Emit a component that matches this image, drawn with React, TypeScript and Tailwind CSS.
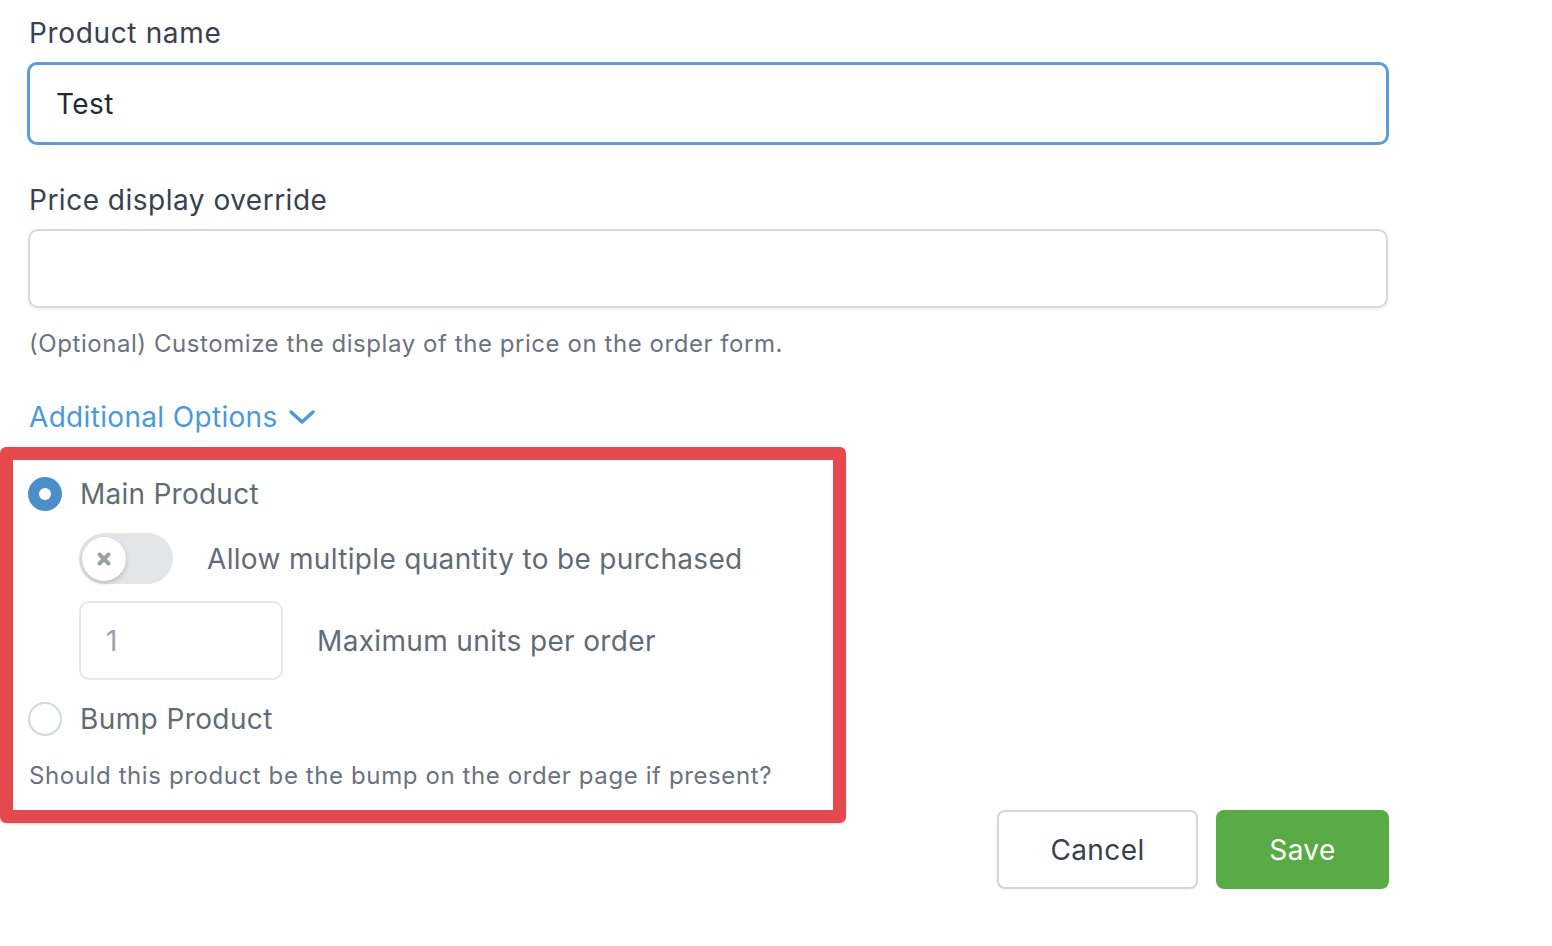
import React from "react";

export default function App() {
  return (
    <div
      className="relative w-[1552px] h-[946px] bg-white overflow-hidden"
      style={{ fontFamily: "Inter, 'Noto Sans', sans-serif" }}
    >
      <div className="w-[1389px] pl-[27px] flex flex-col">
        <label className="mt-[15px] h-[36px] leading-[36px] text-[28px] text-[#374151] pl-[2px] tracking-[0.65px]">
          Product name
        </label>
        <div className="mt-[11px] h-[83px] border-[3px] border-[#5b9dd6] rounded-[10px] flex items-center pl-[26px] text-[28px] text-[#1f2937] tracking-[0.4px]">
          Test
        </div>
        <label className="mt-[37px] h-[36px] leading-[36px] text-[28px] text-[#374151] pl-[2px] tracking-[0.5px]">
          Price display override
        </label>
        <div className="mt-[11px] ml-[1px] mr-[1px] h-[79px] border-2 border-[#d6d9de] rounded-[10px] shadow-[0_2px_2px_rgba(0,0,0,0.06)]" />
        <p className="mt-[20px] h-[32px] leading-[32px] text-[24px] text-[#6b7280] pl-[2px] tracking-[0.56px]">
          (Optional) Customize the display of the price on the order form.
        </p>
        <div className="mt-[39px] h-[36px] flex items-center gap-[10px] text-[28px] text-[#4a9ad8] pl-[2px]">
          <span className="leading-[36px] tracking-[0.33px]">Additional Options</span>
          <svg width="28" height="18" viewBox="0 0 28 18" fill="none">
            <path d="M3 4 L14 14 L25 4" stroke="#4a9ad8" strokeWidth="3.5" strokeLinecap="round" strokeLinejoin="round" />
          </svg>
        </div>

        <div className="mt-[41px] h-[36px] flex items-center gap-[18px] pl-[1px]">
          <span className="w-[34px] h-[34px] rounded-full bg-[#4b8ec9] flex items-center justify-center">
            <span className="w-[12px] h-[12px] rounded-full bg-white" />
          </span>
          <span className="text-[28px] leading-[36px] text-[#5f6c78] tracking-[0.25px]">Main Product</span>
        </div>

        <div className="mt-[21px] h-[51px] pl-[52px] flex items-center gap-[34px]">
          <span className="w-[94px] h-[51px] rounded-full bg-[#e4e5e9] flex items-center pl-[3px]">
            <span className="w-[44px] h-[44px] rounded-full bg-white shadow-[0_2px_5px_rgba(0,0,0,0.2)] flex items-center justify-center">
              <svg width="16" height="16" viewBox="0 0 16 16">
                <path d="M3.5 3.5 L12.5 12.5 M12.5 3.5 L3.5 12.5" stroke="#9aa0aa" strokeWidth="4" strokeLinecap="round" />
              </svg>
            </span>
          </span>
          <span className="text-[28px] leading-[36px] text-[#5f6c78] tracking-[0.33px]">
            Allow multiple quantity to be purchased
          </span>
        </div>

        <div className="mt-[17px] h-[79px] pl-[52px] flex items-center gap-[34px]">
          <div className="w-[204px] h-[79px] border-2 border-[#e6e7eb] rounded-[10px] flex items-center pl-[25px] text-[28px] text-[#9aa1ab]">
            1
          </div>
          <span className="text-[28px] leading-[36px] text-[#5f6c78] tracking-[0.35px]">Maximum units per order</span>
        </div>

        <div className="mt-[21px] h-[36px] flex items-center gap-[18px] pl-[1px]">
          <span className="w-[34px] h-[34px] rounded-full border-2 border-[#d5d8dd] bg-white" />
          <span className="text-[28px] leading-[36px] text-[#5f6c78] tracking-[0.4px]">Bump Product</span>
        </div>

        <p className="mt-[23px] h-[32px] leading-[32px] text-[24px] text-[#6b7280] pl-[2px] tracking-[0.6px]">
          Should this product be the bump on the order page if present?
        </p>

        <div className="mt-[18px] flex justify-end gap-[18px]">
          <button className="w-[201px] h-[79px] border-2 border-[#d3d6db] rounded-[8px] bg-white text-[28px] text-[#374151] tracking-[0.4px] shadow-[0_1px_2px_rgba(0,0,0,0.05)]">
            Cancel
          </button>
          <button className="w-[173px] h-[79px] rounded-[8px] bg-[#58ab45] text-[28px] text-white tracking-[0.4px]">
            Save
          </button>
        </div>
      </div>

      <div className="absolute left-0 top-[447px] w-[846px] h-[376px] border-[13px] border-[#e5484d] rounded-[6px] pointer-events-none shadow-[0_1px_2px_rgba(0,0,0,0.15)]" />
    </div>
  );
}
